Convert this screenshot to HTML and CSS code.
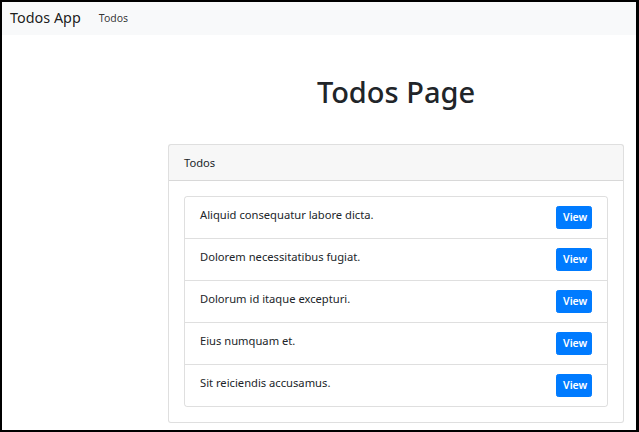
FILE: index.html
```html
<!DOCTYPE html>
<html lang="en">
<head>
<meta charset="utf-8">
<title>Todos App</title>
<link rel="stylesheet" href="styles.css">
</head>
<body>
<div class="frame">
  <nav class="navbar">
    <a class="brand" href="#">Todos App</a>
    <a class="nav-link" href="#">Todos</a>
  </nav>
  <main class="main">
    <div class="side"></div>
    <div class="content">
      <h1 class="title">Todos Page</h1>
      <div class="card">
        <div class="card-header">Todos</div>
        <div class="card-body">
          <ul class="list">
            <li class="item"><span>Aliquid consequatur labore dicta.</span><a class="btn" href="#">View</a></li>
            <li class="item"><span>Dolorem necessitatibus fugiat.</span><a class="btn" href="#">View</a></li>
            <li class="item"><span>Dolorum id itaque excepturi.</span><a class="btn" href="#">View</a></li>
            <li class="item"><span>Eius numquam et.</span><a class="btn" href="#">View</a></li>
            <li class="item"><span>Sit reiciendis accusamus.</span><a class="btn" href="#">View</a></li>
          </ul>
        </div>
      </div>
    </div>
  </main>
</div>
</body>
</html>
```

FILE: styles.css
```css
* { box-sizing: border-box; }
html, body { margin: 0; padding: 0; }
body {
  font-family: "Noto Sans", "Open Sans", sans-serif;
  font-size: 11.2px;
  line-height: 18px;
  color: #212529;
  background: #fff;
}
.frame {
  width: 639px;
  height: 432px;
  border-style: solid;
  border-color: #000;
  border-width: 2px 3px 2px 2px;
  overflow: hidden;
}
.navbar {
  height: 33px;
  background: #f8f9fa;
  display: flex;
  align-items: center;
  padding: 0 8px;
}
.brand {
  font-size: 14.4px;
  color: rgba(0,0,0,.9);
  text-decoration: none;
  margin-right: 18px;
  line-height: 1;
}
.nav-link {
  font-size: 10.5px;
  color: rgba(0,0,0,.8);
  text-decoration: none;
  line-height: 1;
}
.main {
  display: flex;
  padding: 0 12px 0 0;
}
.side { width: 166px; flex: none; }
.content { flex: 1; }
.title {
  margin: 39px 0 34px;
  font-size: 29px;
  font-weight: 500;
  line-height: 36px;
  text-align: center;
}
.card {
  border: 1px solid rgba(0,0,0,.125);
  border-radius: 3px;
  background: #fff;
}
.card-header {
  padding: 9px 15px 8px;
  background: rgba(0,0,0,.03);
  border-bottom: 1px solid rgba(0,0,0,.125);
}
.card-body { padding: 15px; }
.list {
  list-style: none;
  margin: 0;
  padding: 0;
  border: 1px solid rgba(0,0,0,.125);
  border-radius: 3px;
}
.item {
  display: flex;
  justify-content: space-between;
  align-items: flex-start;
  padding: 9px 15px;
  height: 41px;
}
.item + .item {
  border-top: 1px solid rgba(0,0,0,.125);
  height: 42px;
}
.btn {
  display: block;
  background: #007bff;
  color: #fff;
  border: 1px solid #007bff;
  border-radius: 2.4px;
  font-size: 10.5px;
  font-weight: 600;
  line-height: 15px;
  padding: 3px 6px;
  height: 23px;
  width: 36px;
  text-align: center;
  text-decoration: none;
}
```
